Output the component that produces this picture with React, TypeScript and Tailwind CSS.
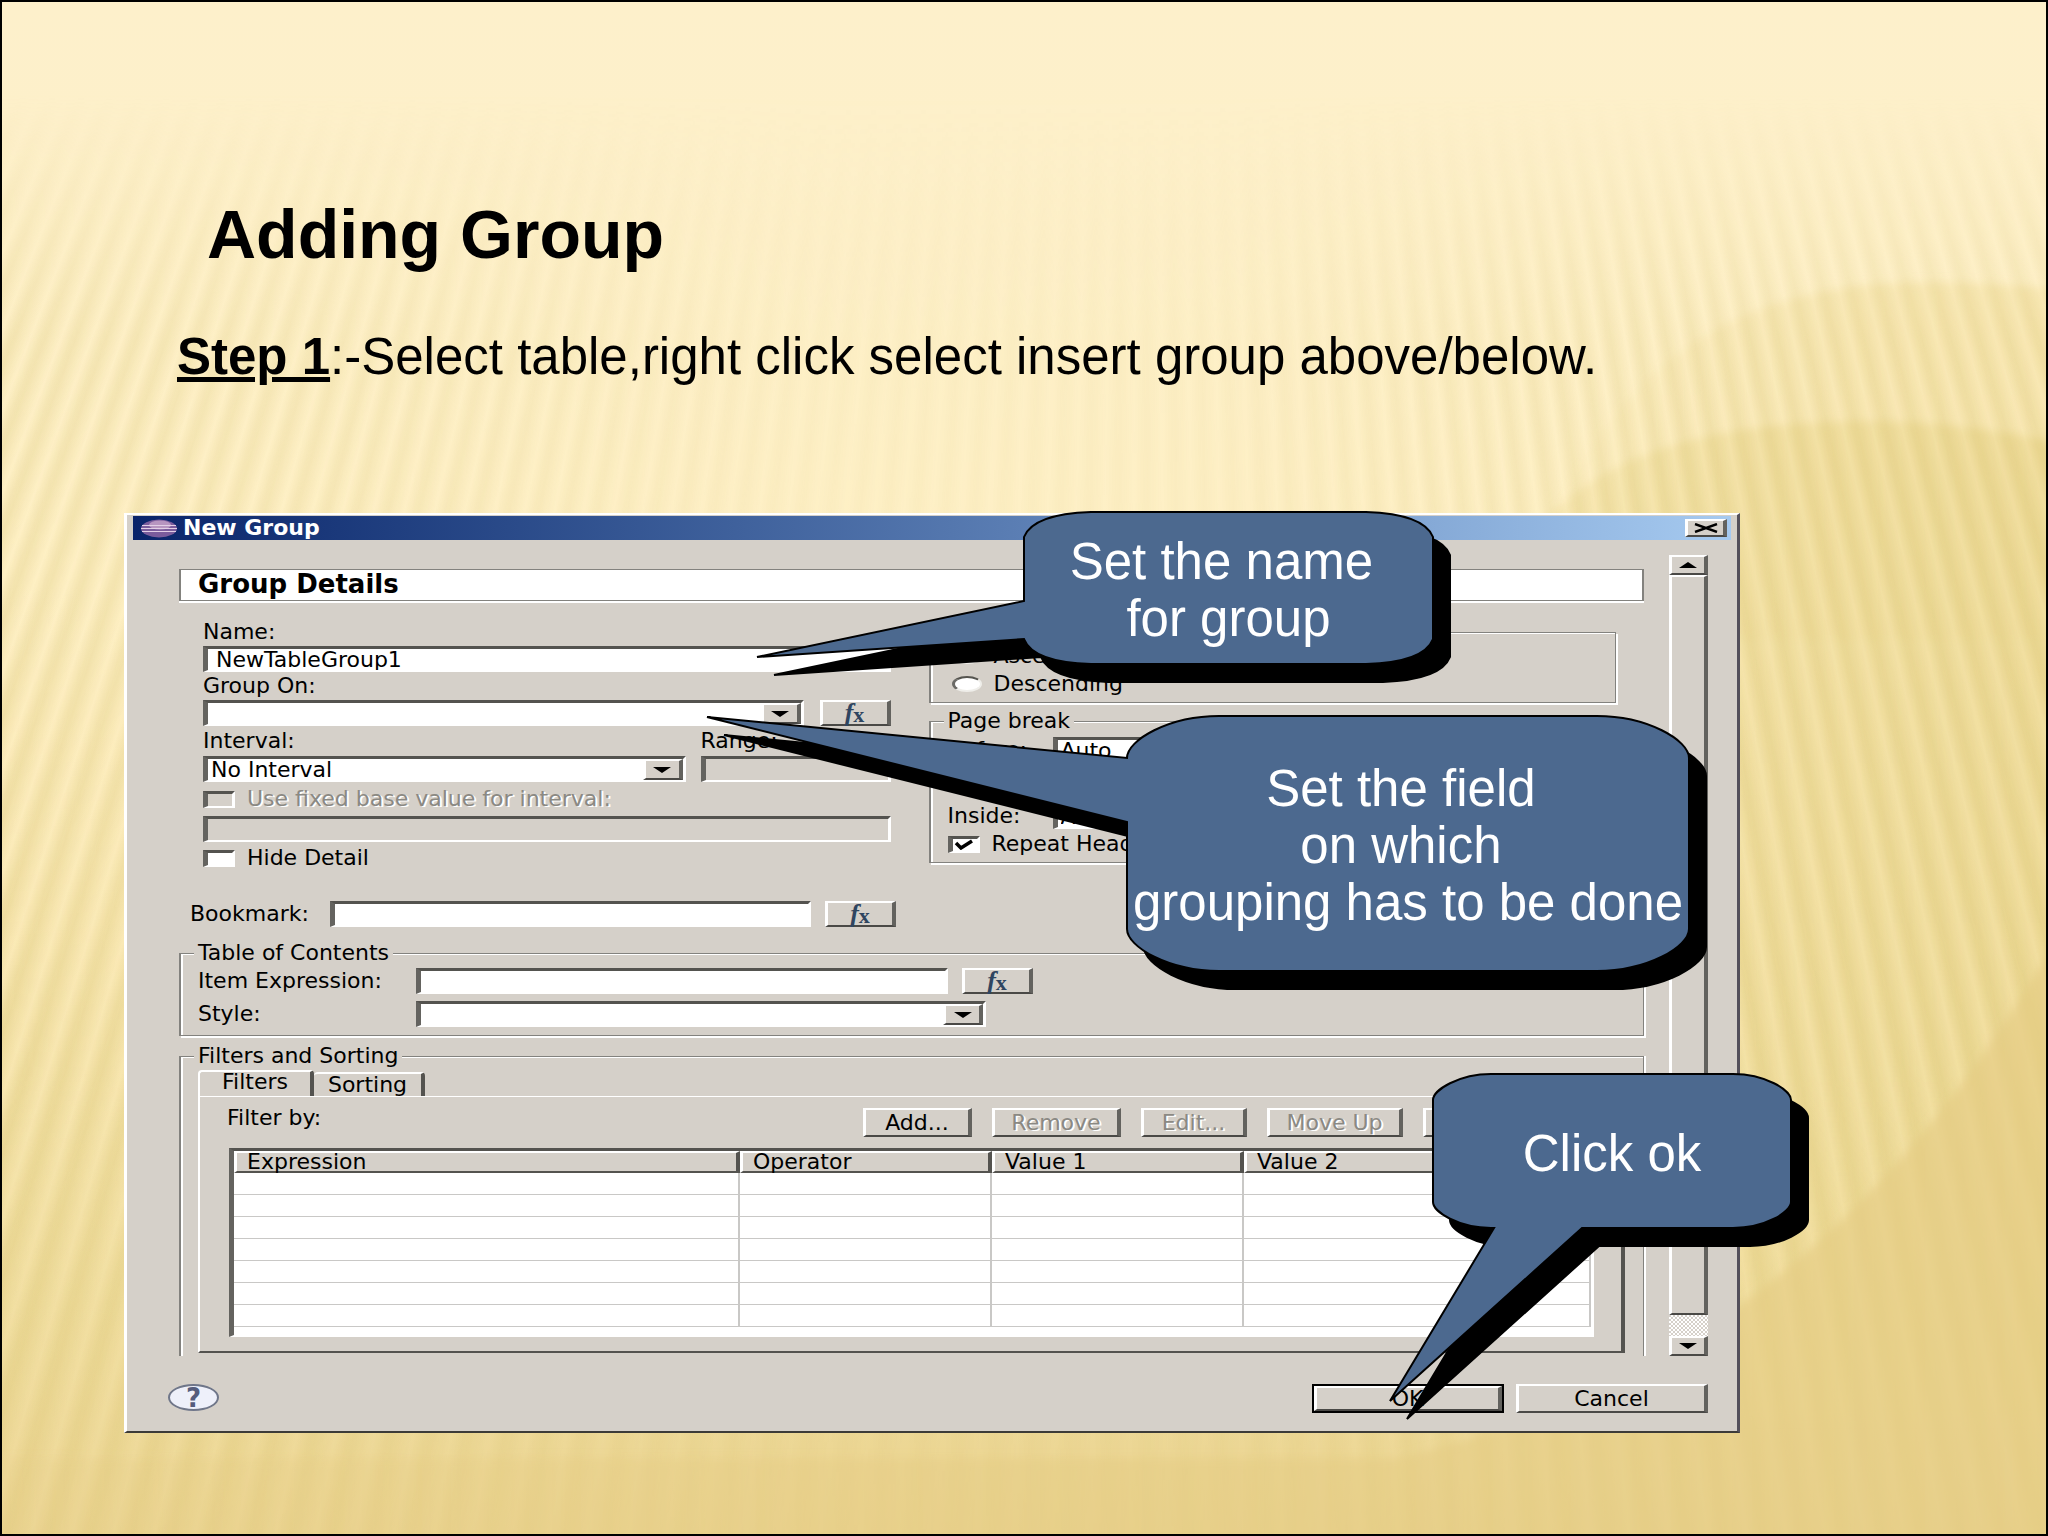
import React from 'react'

const sunken =
  'border-t-[3px] border-l-[5px] border-r-[3px] border-b-2 border-t-[#54534f] border-l-[#64635f] border-r-white border-b-white'
const raised =
  'border-t-2 border-l-[3px] border-r-4 border-b-2 border-t-white border-l-white border-r-[#63625e] border-b-[#4a4946] bg-[#d5d0c9]'
const disabledText = 'text-[#8b8983] [text-shadow:2px_1px_0_#fff]'

const Background: React.FC = () => (
  <div className="absolute inset-0 overflow-hidden" aria-hidden="true">
    <svg className="h-full w-full" viewBox="0 0 2048 1536" preserveAspectRatio="none">
      <defs>
        <linearGradient id="base" x1="0" y1="0" x2="0" y2="1">
          <stop offset="0" stopColor="#fdf0cb" />
          <stop offset="0.38" stopColor="#fef0c6" />
          <stop offset="0.6" stopColor="#f9e8b4" />
          <stop offset="0.85" stopColor="#eedb9a" />
          <stop offset="1" stopColor="#ead38f" />
        </linearGradient>
        <linearGradient id="swoosh" x1="0" y1="0" x2="1" y2="0">
          <stop offset="0" stopColor="#edda96" stopOpacity="0.3" />
          <stop offset="0.5" stopColor="#edda96" stopOpacity="0.75" />
          <stop offset="1" stopColor="#ebd790" stopOpacity="0.9" />
        </linearGradient>
        <linearGradient id="haze" x1="0" y1="0" x2="1" y2="0">
          <stop offset="0" stopColor="#efdb98" stopOpacity="0" />
          <stop offset="0.6" stopColor="#efdb98" stopOpacity="0.45" />
          <stop offset="1" stopColor="#efdb98" stopOpacity="0.5" />
        </linearGradient>
        <linearGradient id="corner" x1="0" y1="0" x2="1" y2="0">
          <stop offset="0" stopColor="#e5cc84" stopOpacity="0.2" />
          <stop offset="0.5" stopColor="#e5cc84" stopOpacity="0.5" />
          <stop offset="1" stopColor="#e5cc84" stopOpacity="0.7" />
        </linearGradient>
        <filter id="soft">
          <feGaussianBlur stdDeviation="4" />
        </filter>
      </defs>
      <rect width="2048" height="1536" fill="url(#base)" />
      <path
        d="M1520 640C1570 400 1700 284 1920 281Q2000 281 2080 290V640Z"
        fill="url(#haze)"
        filter="url(#soft)"
      />
      <path
        d="M1490 620C1530 500 1620 421 1875 420Q1970 421 2080 446V1420H1490Z"
        fill="url(#swoosh)"
        filter="url(#soft)"
      />
    </svg>
    {/* rays fanning out from a point far above the slide */}
    <div className="absolute inset-0 bg-[repeating-conic-gradient(from_150deg_at_56%_-165%,rgba(255,238,190,0.3)_0deg,rgba(222,202,126,0.4)_0.28deg,rgba(222,202,126,0.35)_0.36deg,rgba(255,238,190,0.3)_0.54deg)] [mask-composite:intersect] [mask-image:linear-gradient(to_bottom,transparent_6%,rgba(0,0,0,0.8)_22%,black_70%,rgba(0,0,0,0.6)_100%),linear-gradient(to_right,black_0%,rgba(0,0,0,0.8)_12%,rgba(0,0,0,0.25)_40%,rgba(0,0,0,0.3)_60%,rgba(0,0,0,0.9)_80%,rgba(0,0,0,0.9)_100%)]" />
    <svg className="absolute inset-0 h-full w-full" viewBox="0 0 2048 1536" preserveAspectRatio="none">
      <path
        d="M0 1460H1400C1740 1380 1940 1160 2080 900V1600H0Z"
        fill="url(#corner)"
        filter="url(#soft)"
      />
    </svg>
  </div>
)

interface CalloutProps {
  className: string
  path: string
  lines: string[]
}

const Callout: React.FC<CalloutProps> = ({ className, path, lines }) => (
  <div className={`absolute flex flex-col items-center justify-center pt-1 ${className}`}>
    <svg className="absolute inset-0 h-full w-full overflow-visible" aria-hidden="true">
      <path d={path} transform="translate(17 18)" fill="#000" stroke="#000" strokeWidth="2" />
      <path d={path} fill="#4c698f" stroke="#000" strokeWidth="2" />
    </svg>
    {lines.map((line) => (
      <p key={line} className="relative text-[51px] leading-[57px] whitespace-pre text-white">
        {line}
      </p>
    ))}
  </div>
)

const Arrow: React.FC<{ up?: boolean }> = ({ up }) => (
  <svg className="h-[6px] w-[18px]" viewBox="0 0 18 6">
    <path d={up ? 'M0 6L9 0L18 6Z' : 'M0 0L9 6L18 0Z'} fill="#000" />
  </svg>
)

interface SelectBoxProps {
  id: string
  className?: string
  options: string[]
}

const SelectBox: React.FC<SelectBoxProps> = ({ id, className = '', options }) => (
  <div className={`flex h-[26px] bg-white ${sunken} ${className}`}>
    <select id={id} className="min-w-0 flex-1 appearance-none bg-white pl-[3px] leading-5 outline-none">
      {options.map((option) => (
        <option key={option}>{option}</option>
      ))}
    </select>
    <span className={`pointer-events-none flex w-10 items-center justify-center ${raised}`}>
      <Arrow />
    </span>
  </div>
)

interface TextBoxProps {
  id: string
  className?: string
  value?: string
  disabled?: boolean
  label?: string
}

const TextBox: React.FC<TextBoxProps> = ({ id, className = '', value = '', disabled, label }) => (
  <input
    id={id}
    type="text"
    defaultValue={value}
    disabled={disabled}
    aria-label={label}
    className={`block h-[26px] min-w-0 pl-2 leading-5 outline-none ${sunken} ${
      disabled ? 'bg-[#d5d0c9]' : 'bg-white'
    } ${className}`}
  />
)

const FxButton: React.FC = () => (
  <button
    type="button"
    aria-label="Expression builder"
    className={`flex h-[26px] w-[71px] shrink-0 items-center justify-center font-['Liberation_Serif',serif] font-bold text-[#2f4560] ${raised}`}
  >
    <i className="text-[26px] leading-5">f</i>
    <span className="pt-1 text-[22px] leading-4">x</span>
  </button>
)

interface CheckProps {
  id: string
  label: string
  checked?: boolean
  disabled?: boolean
  className?: string
}

const Check: React.FC<CheckProps> = ({ id, label, checked, disabled, className = '' }) => (
  <div className={`flex items-center gap-3 ${className}`}>
    <span className="grid place-items-center">
      <input
        id={id}
        type="checkbox"
        defaultChecked={checked}
        disabled={disabled}
        className={`col-start-1 row-start-1 h-[17px] w-8 appearance-none ${sunken} ${
          disabled ? 'bg-[#d5d0c9]' : 'bg-white'
        }`}
      />
      {checked && (
        <svg className="pointer-events-none col-start-1 row-start-1 h-[11px] w-5" viewBox="0 0 20 11">
          <path d="M2 4L7 9L18 2" fill="none" stroke="#000" strokeWidth="3.5" />
        </svg>
      )}
    </span>
    <label htmlFor={id} className={`leading-5 whitespace-nowrap ${disabled ? disabledText : ''}`}>
      {label}
    </label>
  </div>
)

const Radio: React.FC<{ id: string; label: string }> = ({ id, label }) => (
  <div className="flex h-7 items-center gap-3">
    <input
      id={id}
      type="radio"
      name="direction"
      className="h-4 w-[30px] appearance-none rounded-[50%] border-t-2 border-r-2 border-b-2 border-l-[3px] border-t-[#55544f] border-r-[#efeeea] border-b-[#efeeea] border-l-[#6b6a66] bg-white"
    />
    <label htmlFor={id} className="leading-5">
      {label}
    </label>
  </div>
)

interface GroupProps {
  legend: string
  className?: string
  children: React.ReactNode
}

const Group: React.FC<GroupProps> = ({ legend, className = '', children }) => (
  <fieldset
    className={`min-w-0 border border-l-2 border-[#83827e] pl-[13px] shadow-[inset_2px_1px_0_#fff,2px_2px_0_#fff] ${className}`}
  >
    <legend className="h-5 bg-[#d5d0c9] px-1 leading-5">{legend}</legend>
    {children}
  </fieldset>
)

const columns = ['Expression', 'Operator', 'Value 1', 'Value 2']
const rows = [1, 2, 3, 4, 5, 6, 7]

const filterActions = [
  { label: 'Add...', className: 'w-[109px] text-black' },
  { label: 'Remove', className: 'w-[129px]', disabled: true },
  { label: 'Edit...', className: 'w-[106px]', disabled: true },
  { label: 'Move Up', className: 'w-[136px]', disabled: true },
  { label: 'Move Down', className: 'w-[171px]', disabled: true },
]

const FilterTable: React.FC = () => (
  <div className={`mt-[11px] mr-[27px] ml-[29px] h-[189px] overflow-hidden bg-white ${sunken}`}>
    <table className="w-full table-fixed border-separate border-spacing-0">
      <colgroup>
        <col className="w-[506px]" />
        <col className="w-[252px]" />
        <col className="w-[252px]" />
        <col />
      </colgroup>
      <thead>
        <tr>
          {columns.map((column) => (
            <th
              key={column}
              className="h-[22px] border-t-2 border-r-4 border-b-2 border-l-[3px] border-t-white border-r-[#54534f] border-b-[#54534f] border-l-white bg-[#d5d0c9] p-0 pl-[10px] text-left leading-[18px] font-normal"
            >
              {column}
            </th>
          ))}
        </tr>
      </thead>
      <tbody>
        {rows.map((row) => (
          <tr key={row}>
            {columns.map((column) => (
              <td key={column} className="h-[22px] border-r-2 border-b border-[#c9c8c6] p-0" />
            ))}
          </tr>
        ))}
      </tbody>
    </table>
  </div>
)

const ScrollBar: React.FC = () => (
  <div className="flex w-[39px] shrink-0 flex-col">
    <button type="button" aria-label="Scroll up" className={`flex h-5 items-center justify-center ${raised}`}>
      <Arrow up />
    </button>
    <div className={`flex-1 ${raised}`} />
    <div className="h-[21px] bg-[repeating-conic-gradient(#fff_0_25%,#d5d0c9_0_50%)] bg-[length:4px_4px]" />
    <button type="button" aria-label="Scroll down" className={`flex h-5 items-center justify-center ${raised}`}>
      <Arrow />
    </button>
  </div>
)

const TitleBar: React.FC = () => (
  <div className="mx-[6px] flex h-6 items-center bg-gradient-to-r from-[#0a246a] to-[#a6caf0] pr-1 pl-[7px]">
    <svg className="h-[19px] w-[38px]" viewBox="0 0 38 19">
      <ellipse cx="19" cy="9.5" rx="18" ry="9" fill="#7a5c9c" />
      <ellipse cx="20" cy="6" rx="11" ry="4.5" fill="#b795c0" />
      <path d="M2 6.5H36M1 9.5H37M2 12.5H36" stroke="#e2cfe6" strokeWidth="1.2" />
    </svg>
    <h2 className="flex-1 pl-[5px] text-[22px] leading-6 font-bold text-white">New Group</h2>
    <button type="button" aria-label="Close" className={`flex h-[18px] w-[42px] items-center justify-center ${raised}`}>
      <svg className="h-[10px] w-6" viewBox="0 0 24 10">
        <path d="M1 1L23 9M23 1L1 9" stroke="#000" strokeWidth="2.4" />
      </svg>
    </button>
  </div>
)

const GroupDetails: React.FC = () => (
  <div className="min-w-0 flex-1 pt-[14px]">
    <h3 className="h-8 border border-r-2 border-l-2 border-[#83827e] bg-white pl-[17px] text-[26px] leading-7 font-bold shadow-[0_2px_0_#fff]">
      Group Details
    </h3>

    <div className="mt-[17px] flex gap-[38px] pr-7 pl-6">
      <div className="min-w-0 flex-1">
        <label htmlFor="name" className="block h-7 leading-7">
          Name:
        </label>
        <TextBox id="name" value="NewTableGroup1" className="w-full" />
        <label htmlFor="group-on" className="block h-7 leading-7">
          Group On:
        </label>
        <div className="flex gap-4">
          <SelectBox id="group-on" className="min-w-0 flex-1" options={['']} />
          <FxButton />
        </div>
        <div className="flex gap-[15px]">
          <div className="min-w-0 flex-1">
            <label htmlFor="interval" className="block h-[30px] leading-[30px]">
              Interval:
            </label>
            <SelectBox id="interval" options={['No Interval']} />
          </div>
          <div className="w-[190px]">
            <label htmlFor="range" className="block h-[30px] leading-[30px]">
              Range:
            </label>
            <TextBox id="range" disabled className="w-full" />
          </div>
        </div>
        <Check id="fixed-base" label="Use fixed base value for interval:" disabled className="h-[34px]" />
        <TextBox id="base-value" label="Base value" disabled className="w-full" />
        <Check id="hide-detail" label="Hide Detail" className="h-8" />
      </div>

      <div className="min-w-0 flex-1 pt-1">
        <Group legend="Sort Direction" className="pb-1">
          <div className="pl-2">
            <Radio id="ascending" label="Ascending" />
            <Radio id="descending" label="Descending" />
          </div>
        </Group>
        <Group legend="Page break" className="mt-2 pb-[3px]">
          <div className="flex flex-col gap-[7px] pt-[6px] pr-4 pl-1">
            {['Before:', 'After:', 'Inside:'].map((label) => (
              <div key={label} className="flex items-center">
                <label htmlFor={label} className="w-[105px] leading-[26px]">
                  {label}
                </label>
                <SelectBox id={label} className="flex-1" options={['Auto']} />
              </div>
            ))}
          </div>
          <Check id="repeat-header" label="Repeat Header" checked className="h-[30px] pl-1" />
        </Group>
      </div>
    </div>

    <div className="mt-[27px] flex items-center pl-[11px]">
      <label htmlFor="bookmark" className="w-[140px] leading-[26px]">
        Bookmark:
      </label>
      <TextBox id="bookmark" className="mr-[14px] w-[481px]" />
      <FxButton />
    </div>

    <Group legend="Table of Contents" className="mt-4 pb-2">
      <div className="flex flex-col gap-[7px] pt-[5px] pl-1">
        <div className="flex items-center">
          <label htmlFor="item-expression" className="w-[218px] leading-[26px]">
            Item Expression:
          </label>
          <TextBox id="item-expression" className="mr-[14px] w-[532px]" />
          <FxButton />
        </div>
        <div className="flex items-center">
          <label htmlFor="style" className="w-[218px] leading-[26px]">
            Style:
          </label>
          <SelectBox id="style" className="w-[570px]" options={['']} />
        </div>
      </div>
    </Group>

    <fieldset className="mt-[10px] min-w-0 border border-b-0 border-l-2 border-[#83827e] pr-[18px] pb-[3px] pl-[13px] shadow-[inset_2px_1px_0_#fff,2px_0_0_#fff]">
      <legend className="h-5 bg-[#d5d0c9] px-1 leading-5">Filters and Sorting</legend>
      <div className="flex items-end pt-1 pl-1" role="tablist">
        <button
          type="button"
          role="tab"
          aria-selected="true"
          className="h-[26px] w-[116px] rounded-t border-t-2 border-r-4 border-l-2 border-t-white border-r-[#54534f] border-l-white pb-1 leading-5"
        >
          Filters
        </button>
        <button
          type="button"
          role="tab"
          className="h-6 w-[111px] rounded-t border-t-2 border-r-4 border-t-white border-r-[#54534f] leading-5"
        >
          Sorting
        </button>
      </div>
      <div className="ml-1 border-t border-r-4 border-b-2 border-l-2 border-t-white border-r-[#54534f] border-b-[#54534f] border-l-white pt-[11px] pb-[14px]">
        <div className="flex pr-[27px] pl-[27px]">
          <span className="flex-1 leading-5">Filter by:</span>
          <div className="flex gap-5">
            {filterActions.map((action) => (
              <button
                key={action.label}
                type="button"
                disabled={action.disabled}
                className={`h-[29px] leading-5 ${raised} ${action.disabled ? disabledText : ''} ${action.className}`}
              >
                {action.label}
              </button>
            ))}
          </div>
        </div>
        <FilterTable />
      </div>
    </fieldset>
  </div>
)

const App: React.FC = () => {
  return (
    <main className="relative min-h-screen border-2 border-black pt-[194px] pb-16 font-['Liberation_Sans',Arial,sans-serif] text-black">
      <Background />

      <header className="relative">
        <h1 className="pl-[205px] text-[68px] leading-[76px] font-bold">Adding Group</h1>
        <p className="mt-14 pl-[175px] text-[51px] leading-[57px]">
          <b className="underline">Step 1</b>:-Select table,right click select insert group above/below.
        </p>
      </header>

      <section className="relative mt-32 mr-[306px] ml-[122px] border-t-2 border-r-[3px] border-b-2 border-l-[3px] border-t-white border-r-[#54505a] border-b-[#3c3b38] border-l-white bg-[#d5d0c9] pt-px">
        <div className="font-['DejaVu_Sans',Verdana,sans-serif] text-[22px]">
          <TitleBar />
          <div className="flex gap-[25px] pt-[15px] pr-[29px] pl-[52px]">
            <GroupDetails />
            <ScrollBar />
          </div>
          <footer className="mt-7 flex gap-3 pr-[29px] pb-[18px] pl-[41px]">
            <button
              type="button"
              aria-label="Help"
              className="mr-auto h-[27px] w-[51px] rounded-[50%] border-2 border-[#6f7689] bg-[#eef0fa] text-[26px] leading-[22px] font-bold text-[#555c7c]"
            >
              ?
            </button>
            <div className="flex border-2 border-black">
              <button type="button" className={`h-[25px] w-[188px] leading-5 ${raised}`}>
                OK
              </button>
            </div>
            <button type="button" className={`h-[29px] w-[192px] leading-5 ${raised}`}>
              Cancel
            </button>
          </footer>
        </div>

        <Callout
          className="-top-[3px] left-[897px] h-[152px] w-[409px]"
          path="M67 0H342Q400 2 409 25V127Q400 150 342 152H67Q9 150 0 127L-267 145L0 89V25Q9 2 67 0Z"
          lines={['Set the name ', 'for group']}
        />
        <Callout
          className="top-[201px] left-[1000px] h-[255px] w-[562px]"
          path="M92 0H470C520 0 562 24 562 42V213C562 231 520 255 470 255H92C42 255 0 231 0 213V106L-420 1L0 42C0 24 42 0 92 0Z"
          lines={['Set the field ', 'on which ', 'grouping has to be done']}
        />
        <Callout
          className="top-[559px] -right-[54px] h-[154px] w-[358px]"
          path="M58 0H300C332 0 358 16 358 26V128C358 138 332 154 300 154H149L-43 327L61 154H58C26 154 0 138 0 128V26C0 16 26 0 58 0Z"
          lines={['Click ok']}
        />
      </section>
    </main>
  )
}

export default App
